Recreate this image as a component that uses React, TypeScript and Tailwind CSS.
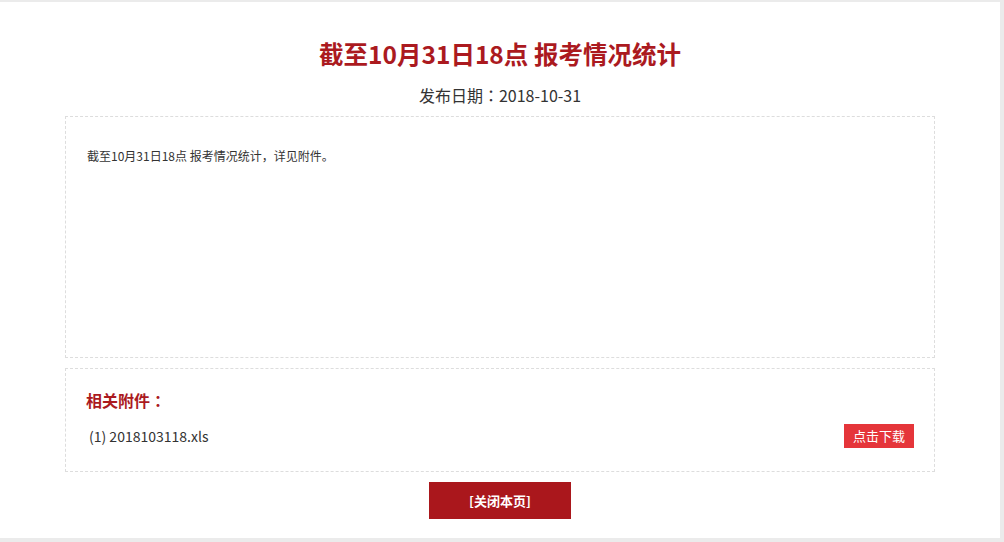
const font = { fontFamily: '"Noto Sans CJK SC", "Noto Sans", sans-serif' };
const colonFont = { fontFamily: '"Noto Sans CJK TC", "Noto Sans CJK SC", sans-serif' };

function Colon() {
  return <span style={colonFont}>：</span>;
}

export default function App() {
  return (
    <div className="h-[542px] w-[1004px] bg-[#ebebeb] pt-[2px] [text-spacing-trim:space-all]" style={font}>
      <div className="flex h-[536px] w-[1000px] flex-col items-center bg-white pt-[34px]">
        <h1 className="text-[24.5px] font-bold leading-[36px] text-[#ab1a1f]">
          截至10月31日18点 报考情况统计
        </h1>
        <p className="mt-[11px] text-[16px] leading-[24px] text-[#333]">
          发布日期<Colon />2018-10-31
        </p>

        <div className="mt-[9px] h-[242px] w-[870px] border border-dashed border-[#dddddd] px-[21px] pt-[29px]">
          <p className="text-[12px] leading-[20px] text-[#333]">
            截至10月31日18点 报考情况统计，详见附件。
          </p>
        </div>

        <div className="mt-[10px] h-[104px] w-[870px] border border-dashed border-[#dddddd] px-[20px] pt-[19px]">
          <h2 className="text-[16px] font-bold leading-[24px] text-[#ab1a1f]">
            相关附件<Colon />
          </h2>
          <div className="mt-[12px] flex items-center justify-between pl-[3px]">
            <span className="text-[14px] leading-[20px] text-[#333]">(1) 2018103118.xls</span>
            <button className="h-[24px] w-[70px] bg-[#e5353a] text-[13px] leading-[24px] text-white">
              点击下载
            </button>
          </div>
        </div>

        <button className="mt-[10px] h-[37px] w-[142px] bg-[#aa171c] text-[13px] font-bold text-white">
          [关闭本页]
        </button>
      </div>
    </div>
  );
}
